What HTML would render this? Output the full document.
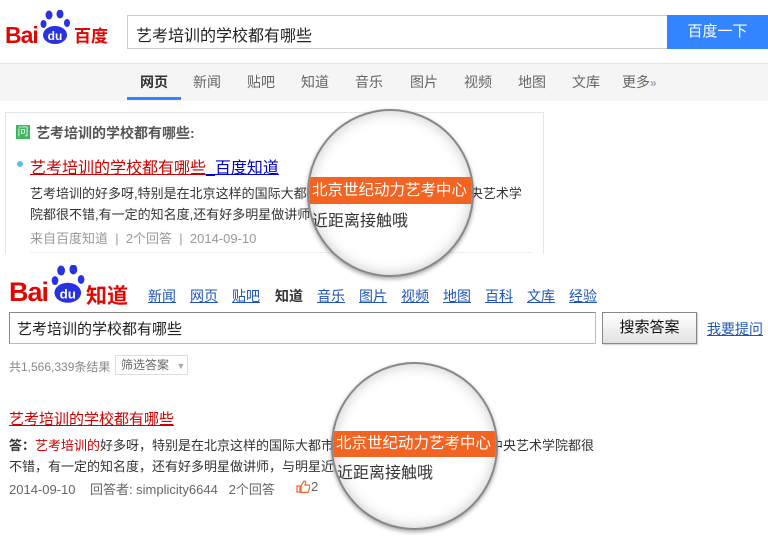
<!DOCTYPE html>
<html><head><meta charset="utf-8"><style>
*{margin:0;padding:0;box-sizing:border-box}
body{width:768px;height:537px;background:#fff;position:relative;overflow:hidden;font-family:"Liberation Sans","Noto Sans CJK SC",sans-serif;color:#333}
.a{position:absolute;white-space:nowrap}
.nav span{position:absolute;top:72px;font-size:14px;color:#666}
.nl a{position:absolute;top:286px;font-size:14px;color:#2155b5;text-decoration:underline}
.lens{position:absolute;border-radius:50%;background:#fff;border:2px solid #888;box-shadow:0 2px 4px rgba(0,0,0,.35), inset 0 0 14px rgba(0,0,0,.22);overflow:hidden}
.band{position:absolute;left:0;right:0;background:#f36321;color:#fff;font-size:15.5px;white-space:nowrap}
</style></head><body>

<!-- top logo -->
<div class="a" style="left:5px;top:22px;font:bold 23px 'Liberation Sans',sans-serif;color:#e10601;letter-spacing:-1px">Bai</div>
<svg class="a" style="left:40px;top:10px" width="34" height="36" viewBox="0 0 34 36">
<g fill="#2932e1"><ellipse cx="9" cy="5" rx="3.5" ry="4.5"/><ellipse cx="20" cy="4" rx="3.5" ry="4.5"/><ellipse cx="3.5" cy="14" rx="3" ry="4"/><ellipse cx="27" cy="13" rx="3" ry="4"/><ellipse cx="15" cy="25" rx="12" ry="9"/></g>
<text x="15" y="30" font-family="Liberation Sans" font-weight="bold" font-size="12" fill="#fff" text-anchor="middle">du</text></svg>
<div class="a" style="left:74px;top:22px;font-weight:bold;font-size:17px;color:#e10601">百度</div>

<div class="a" style="left:127px;top:15px;width:541px;height:34px;border:1px solid #ccc;border-right:none"></div>
<div class="a" style="left:136px;top:22px;font-size:16px;color:#222">艺考培训的学校都有哪些</div>
<div class="a" style="left:667px;top:15px;width:101px;height:34px;background:#3385ff;color:#fff;font-size:15px;text-align:center;line-height:34px">百度一下</div>

<div class="a" style="left:0;top:63px;width:768px;height:38px;background:#f5f5f5;border-top:1px solid #e5e5e5"></div>
<div class="nav">
<span style="left:140px;font-weight:bold;color:#333">网页</span>
<span style="left:193px">新闻</span><span style="left:247px">贴吧</span><span style="left:301px">知道</span><span style="left:355px">音乐</span><span style="left:410px">图片</span><span style="left:464px">视频</span><span style="left:518px">地图</span><span style="left:572px">文库</span><span style="left:622px">更多<b style="color:#9ab;font-size:12px">»</b></span>
</div>
<div class="a" style="left:127px;top:97px;width:54px;height:3px;background:#3385ff"></div>

<!-- card -->
<div class="a" style="left:5px;top:112px;width:539px;height:142px;border:1px solid #e5e5e5;border-bottom:none"></div>
<div class="a" style="left:16px;top:125px;width:14px;height:14px;background:#3fb760;color:#fff;font-size:11px;text-align:center;line-height:14px">问</div>
<div class="a" style="left:36px;top:123px;font-size:14px;font-weight:bold;color:#555">艺考培训的学校都有哪些:</div>
<div class="a" style="left:17px;top:161px;width:6px;height:6px;border-radius:50%;background:#5bbcf5"></div>
<div class="a" style="left:30px;top:154px;font-size:16px"><span style="color:#c00;text-decoration:underline">艺考培训的学校都有哪些</span><span style="color:#00c;text-decoration:underline">_百度知道</span></div>
<div class="a" style="left:30px;top:183px;font-size:13px;color:#333;line-height:21px">艺考培训的好多呀,特别是在北京这样的国际大都市,北京世纪动力艺考中心,中央艺术学<br>院都很不错,有一定的知名度,还有好多明星做讲师,与明星近距离接触哦</div>
<div class="a" style="left:30px;top:228px;font-size:13px;color:#999">来自百度知道 &nbsp;|&nbsp; 2个回答 &nbsp;|&nbsp; 2014-09-10</div>
<div class="a" style="left:30px;top:252px;width:502px;height:1px;background:#eee"></div>

<div class="lens" style="left:307px;top:109px;width:167px;height:168px">
<div class="band" style="top:66px;height:27px;line-height:27px;padding-left:3px">北京世纪动力艺考中心</div>
<div class="a" style="left:3px;top:96px;font-size:16px;color:#333">近距离接触哦</div>
</div>

<!-- second section logo -->
<div class="a" style="left:9px;top:277px;font:bold 27px 'Liberation Sans',sans-serif;color:#e10601;letter-spacing:-1px">Bai</div>
<svg class="a" style="left:50px;top:265px" width="40" height="40" viewBox="0 0 34 36">
<g fill="#2932e1"><ellipse cx="9" cy="5" rx="3.5" ry="4.5"/><ellipse cx="20" cy="4" rx="3.5" ry="4.5"/><ellipse cx="3.5" cy="14" rx="3" ry="4"/><ellipse cx="27" cy="13" rx="3" ry="4"/><ellipse cx="15" cy="25" rx="12" ry="9"/></g>
<text x="15" y="30" font-family="Liberation Sans" font-weight="bold" font-size="12" fill="#fff" text-anchor="middle">du</text></svg>
<div class="a" style="left:86px;top:280px;font-weight:bold;font-size:21px;color:#e10601">知道</div>
<div class="nl">
<a style="left:148px">新闻</a><a style="left:190px">网页</a><a style="left:232px">贴吧</a><a style="left:275px;color:#333;font-weight:bold;text-decoration:none">知道</a><a style="left:317px">音乐</a><a style="left:359px">图片</a><a style="left:401px">视频</a><a style="left:443px">地图</a><a style="left:485px">百科</a><a style="left:527px">文库</a><a style="left:569px">经验</a>
</div>
<div class="a" style="left:9px;top:312px;width:587px;height:32px;border:1px solid #999;border-color:#888 #bbb #bbb #888"></div>
<div class="a" style="left:17px;top:318px;font-size:15px;color:#222">艺考培训的学校都有哪些</div>
<div class="a" style="left:602px;top:312px;width:95px;height:32px;border:1px solid #888;background:linear-gradient(#fff,#e2e2e2);text-align:center;line-height:30px;font-size:15px;color:#111;box-shadow:1px 1px 1px #ccc">搜索答案</div>
<div class="a" style="left:707px;top:319px;font-size:14px;color:#2155b5;text-decoration:underline">我要提问</div>

<div class="a" style="left:9px;top:358px;font-size:12px;color:#888">共1,566,339条结果</div>
<div class="a" style="left:115px;top:355px;width:73px;height:20px;border:1px solid #ddd;font-size:12px;color:#666;line-height:18px;padding-left:5px">筛选答案 <span style="color:#aaa;font-size:9px;margin-left:4px">▼</span></div>

<div class="a" style="left:9px;top:408px;font-size:15px;color:#c00;text-decoration:underline">艺考培训的学校都有哪些</div>
<div class="a" style="left:9px;top:435px;font-size:13px;color:#333;line-height:21px"><b>答：</b><span style="color:#c00">艺考培训的</span>好多呀，特别是在北京这样的国际大都市，北京世纪动力艺考中心，中央艺术学院都很<br>不错，有一定的知名度，还有好多明星做讲师，与明星近距离接触哦</div>
<div class="a" style="left:9px;top:479px;font-size:13px;color:#666">2014-09-10 &nbsp;&nbsp; 回答者: simplicity6644 &nbsp;&nbsp;2个回答</div>
<svg class="a" style="left:296px;top:480px" width="14" height="13" viewBox="0 0 14 13"><path d="M1 6h3v6H1z M5 6l3-5c1.5 0 2 1 1.5 2.5L9 5h3.5c1 0 1.5 1 1.2 2l-1.2 4.5c-.2.6-.7.9-1.3.9H5z" fill="none" stroke="#f36321" stroke-width="1.2"/></svg>
<div class="a" style="left:311px;top:479px;font-size:13px;color:#666">2</div>

<div class="lens" style="left:331px;top:362px;width:167px;height:168px">
<div class="band" style="top:67px;height:26px;line-height:26px;padding-left:3px">北京世纪动力艺考中心</div>
<div class="a" style="left:4px;top:95px;font-size:16px;color:#333">近距离接触哦</div>
</div>
</body></html>
